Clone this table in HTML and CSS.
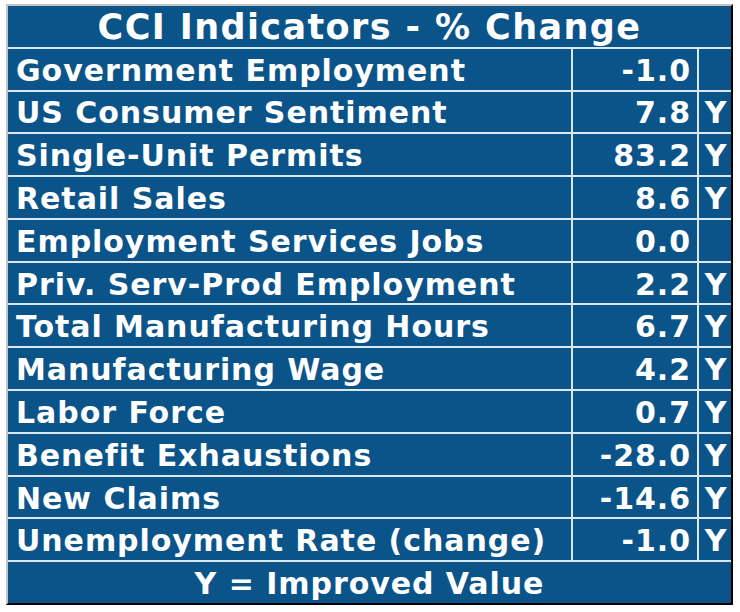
FILE: index.html
```html
<!DOCTYPE html>
<html lang="en">
<head>
<meta charset="utf-8">
<title>CCI Indicators</title>
<link rel="stylesheet" href="styles.css">
</head>
<body>
<div class="cci">
  <div class="cell title">CCI Indicators - % Change</div>

  <div class="cell name">Government Employment</div><div class="cell val">-1.0</div><div class="cell flag"></div>
  <div class="cell name">US Consumer Sentiment</div><div class="cell val">7.8</div><div class="cell flag">Y</div>
  <div class="cell name">Single-Unit Permits</div><div class="cell val">83.2</div><div class="cell flag">Y</div>
  <div class="cell name">Retail Sales</div><div class="cell val">8.6</div><div class="cell flag">Y</div>
  <div class="cell name">Employment Services Jobs</div><div class="cell val">0.0</div><div class="cell flag"></div>
  <div class="cell name">Priv. Serv-Prod Employment</div><div class="cell val">2.2</div><div class="cell flag">Y</div>
  <div class="cell name">Total Manufacturing Hours</div><div class="cell val">6.7</div><div class="cell flag">Y</div>
  <div class="cell name">Manufacturing Wage</div><div class="cell val">4.2</div><div class="cell flag">Y</div>
  <div class="cell name">Labor Force</div><div class="cell val">0.7</div><div class="cell flag">Y</div>
  <div class="cell name">Benefit Exhaustions</div><div class="cell val">-28.0</div><div class="cell flag">Y</div>
  <div class="cell name">New Claims</div><div class="cell val">-14.6</div><div class="cell flag">Y</div>
  <div class="cell name">Unemployment Rate (change)</div><div class="cell val">-1.0</div><div class="cell flag">Y</div>

  <div class="cell foot">Y = Improved Value</div>
</div>
</body>
</html>
```

FILE: styles.css
```css
html, body {
  margin: 0;
  padding: 0;
  background: #ffffff;
}

body {
  font-family: "DejaVu Sans", Verdana, sans-serif;
  font-weight: bold;
  color: #ffffff;
}

.cci {
  margin: 4px 0 0 6px;
  width: 723px;
  height: 597px;
  border-style: solid;
  border-width: 2px;
  border-color: #c4c4c4 #000000 #000000 #c4c4c4;
  background: #dbe6f1;
  display: grid;
  grid-template-columns: 563px 124px 32px;
  grid-template-rows: repeat(14, 1fr);
  gap: 2px;
}

.cell {
  background: #0b548a;
  display: flex;
  align-items: center;
  padding-top: 3px;
  font-size: 30px;
  letter-spacing: 0.95px;
  line-height: 1;
  white-space: nowrap;
  overflow: hidden;
}

.title {
  grid-column: 1 / -1;
  justify-content: center;
  font-size: 35px;
  letter-spacing: 1.4px;
}

.foot {
  grid-column: 1 / -1;
  justify-content: center;
}

.name {
  padding-left: 8px;
}

.val {
  justify-content: flex-end;
  padding-right: 6px;
}

.flag {
  justify-content: center;
  padding-left: 2px;
}
```
